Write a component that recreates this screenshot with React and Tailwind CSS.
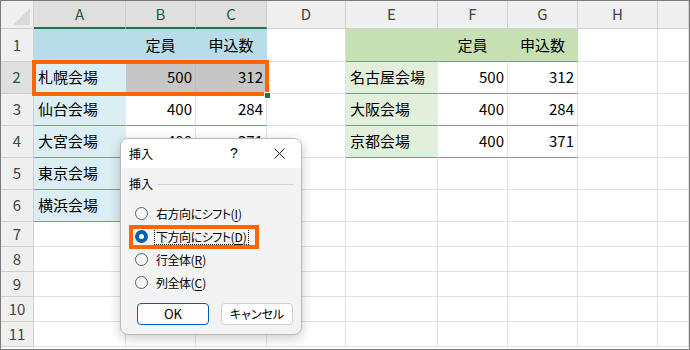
import React from "react";

function Cell({ t, a = "l", cls = "" }) {
  const al = a === "r" ? "justify-end pr-[3px]" : a === "c" ? "justify-center" : "justify-start pl-[4px]";
  return (
    <div className={`flex items-center border-r border-b text-[15px] text-black whitespace-nowrap overflow-hidden ${al} ${cls}`}>
      {t}
    </div>
  );
}

const W = "bg-white border-[#e1e1e1]";
const A1 = "bg-[#b7dee8] border-r-[#b7dee8] border-b-[#4bacc6]";
const AL = "bg-[#daeef3] border-r-[#daeef3] border-b-[#4bacc6]";
const AW = "bg-white border-r-[#e1e1e1] border-b-[#4bacc6]";
const AS = "bg-[#c6c6c6] border-r-[#bdbdbd] border-b-[#4bacc6]";
const E1 = "bg-[#c6e0b4] border-r-[#c6e0b4] border-b-[#70ad47]";
const EL = "bg-[#e2efda] border-r-[#e2efda] border-b-[#70ad47]";
const EW = "bg-white border-r-[#e1e1e1] border-b-[#70ad47]";

const rows = [
  [
    { cls: A1 }, { t: "定員", a: "c", cls: A1 }, { t: "申込数", a: "c", cls: A1 }, { cls: W },
    { cls: E1 }, { t: "定員", a: "c", cls: E1 }, { t: "申込数", a: "c", cls: E1 }, { cls: W }, { cls: W },
  ],
  [
    { t: "札幌会場", cls: AL }, { t: "500", a: "r", cls: AS }, { t: "312", a: "r", cls: AS }, { cls: W },
    { t: "名古屋会場", cls: EL }, { t: "500", a: "r", cls: EW }, { t: "312", a: "r", cls: EW }, { cls: W }, { cls: W },
  ],
  [
    { t: "仙台会場", cls: AL }, { t: "400", a: "r", cls: AW }, { t: "284", a: "r", cls: AW }, { cls: W },
    { t: "大阪会場", cls: EL }, { t: "400", a: "r", cls: EW }, { t: "284", a: "r", cls: EW }, { cls: W }, { cls: W },
  ],
  [
    { t: "大宮会場", cls: AL }, { t: "400", a: "r", cls: AW }, { t: "371", a: "r", cls: AW }, { cls: W },
    { t: "京都会場", cls: EL }, { t: "400", a: "r", cls: EW }, { t: "371", a: "r", cls: EW }, { cls: W }, { cls: W },
  ],
  [
    { t: "東京会場", cls: AL }, { cls: AW }, { cls: AW }, { cls: W },
    { cls: W }, { cls: W }, { cls: W }, { cls: W }, { cls: W },
  ],
  [
    { t: "横浜会場", cls: AL }, { cls: AW }, { cls: AW }, { cls: W },
    { cls: W }, { cls: W }, { cls: W }, { cls: W }, { cls: W },
  ],
];
for (let i = 0; i < 5; i++) rows.push(Array.from({ length: 9 }, () => ({ cls: W })));

const colLetters = ["A", "B", "C", "D", "E", "F", "G", "H", ""];

function Radio({ checked }) {
  return checked ? (
    <span className="w-[13px] h-[13px] rounded-full bg-[#005fb8] flex items-center justify-center shrink-0">
      <span className="w-[5px] h-[5px] rounded-full bg-white" />
    </span>
  ) : (
    <span className="w-[13px] h-[13px] rounded-full border border-[#5d5d5d] bg-[#f7f7f7] shrink-0" />
  );
}

function Opt({ label, k, checked, focus }) {
  return (
    <div className="h-[23px] flex items-center pl-[14px] gap-[7px]">
      <Radio checked={checked} />
      <span className={`flex items-center leading-[15px] px-[1px] whitespace-nowrap ${focus ? "outline outline-1 outline-dotted outline-black" : ""}`}>
        <span className="tracking-[-0.5px] [font-feature-settings:'palt']">{label}</span>
        <span>(</span>
        <span className="underline underline-offset-2">{k}</span>
        <span>)</span>
      </span>
    </div>
  );
}

export default function App() {
  return (
    <div className="w-[690px] h-[350px] relative overflow-hidden bg-white border border-[#7b7b7b] font-['Noto_Sans_CJK_JP',sans-serif]">
      <div className="grid grid-cols-[33px_92px_70px_71px_79px_92px_70px_70px_80px_1fr] grid-rows-[28px_33px_32px_32px_32px_32px_32px_25px_25px_25px_25px_25px]">
        <div className="bg-[#efefef] border-r border-b border-[#cfcfcf] flex items-end justify-end p-[2px]">
          <svg width="18" height="18" viewBox="0 0 18 18">
            <polygon points="0,17 17,0 17,17" fill="#d9d9d9" />
          </svg>
        </div>
        {colLetters.map((c, i) =>
          i < 3 ? (
            <div key={c} className="bg-[#dfdfdf] border-r border-[#cfcfcf] border-b-2 border-b-[#217346] flex items-center justify-center text-[15px] text-[#1f5c3b]">
              {c}
            </div>
          ) : (
            <div key={i} className="bg-[#efefef] border-r border-b border-[#d2d2d2] flex items-center justify-center text-[15px] text-[#444]">
              {c}
            </div>
          )
        )}
        {rows.map((r, ri) => (
          <React.Fragment key={ri}>
            {ri === 1 ? (
              <div className="bg-[#dfdfdf] border-r-2 border-r-[#217346] border-b border-b-[#cfcfcf] flex items-center justify-center text-[15px] text-[#1f5c3b]">
                {ri + 1}
              </div>
            ) : (
              <div className="bg-[#efefef] border-r border-b border-[#cfcfcf] flex items-center justify-center text-[15px] text-[#444]">
                {ri + 1}
              </div>
            )}
            {r.map((c, ci) => (
              <Cell key={ci} t={c.t} a={c.a} cls={c.cls} />
            ))}
          </React.Fragment>
        ))}
      </div>

      <div className="absolute left-[31px] top-[59px] w-[237px] h-[36px] border-4 border-[#ff6600]" />
      <div className="absolute left-[263px] top-[91px] w-[5px] h-[5px] bg-[#217346] border border-white box-content" />

      <div className="absolute left-[119px] top-[137px] w-[182px] h-[197px] rounded-[8px] border border-[#b9b9b9] bg-[#f3f3f3] shadow-[0_3px_12px_rgba(0,0,0,0.22)] overflow-hidden text-[12px] text-black">
        <div className="h-[29px] bg-white flex items-center pl-[8px] pr-[7px]">
          <span className="flex-1">挿入</span>
          <span className="w-[30px] text-center text-[14px] font-['Liberation_Sans',sans-serif]">?</span>
          <span className="w-[15px]" />
          <span className="w-[30px] flex justify-center">
            <svg width="11" height="11" viewBox="0 0 11 11">
              <path d="M0.5 0.5 L10.5 10.5 M10.5 0.5 L0.5 10.5" stroke="#222" strokeWidth="1" />
            </svg>
          </span>
        </div>
        <div className="flex items-center h-[16px] mt-[8px] pl-[8px] pr-[7px] gap-[4px]">
          <span>挿入</span>
          <span className="flex-1 h-px bg-[#d6d6d6]" />
        </div>
        <div className="mt-[10px] flex flex-col">
          <Opt label="右方向にシフト" k="I" />
          <Opt label="下方向にシフト" k="D" checked focus />
          <Opt label="行全体" k="R" />
          <Opt label="列全体" k="C" />
        </div>
        <div className="mt-[9px] flex justify-end gap-[12px] pr-[8px]">
          <div className="w-[72px] h-[22px] rounded-[4px] border border-[#005fb8] bg-[#fdfdfd] flex items-center justify-center text-[13px]">OK</div>
          <div className="w-[72px] h-[22px] rounded-[4px] border border-[#d0d0d0] bg-[#fdfdfd] flex items-center justify-center [font-feature-settings:'palt']">キャンセル</div>
        </div>
        <div className="absolute left-[8px] top-[86px] w-[130px] h-[24px] border-4 border-[#ff6600]" />
      </div>
    </div>
  );
}
